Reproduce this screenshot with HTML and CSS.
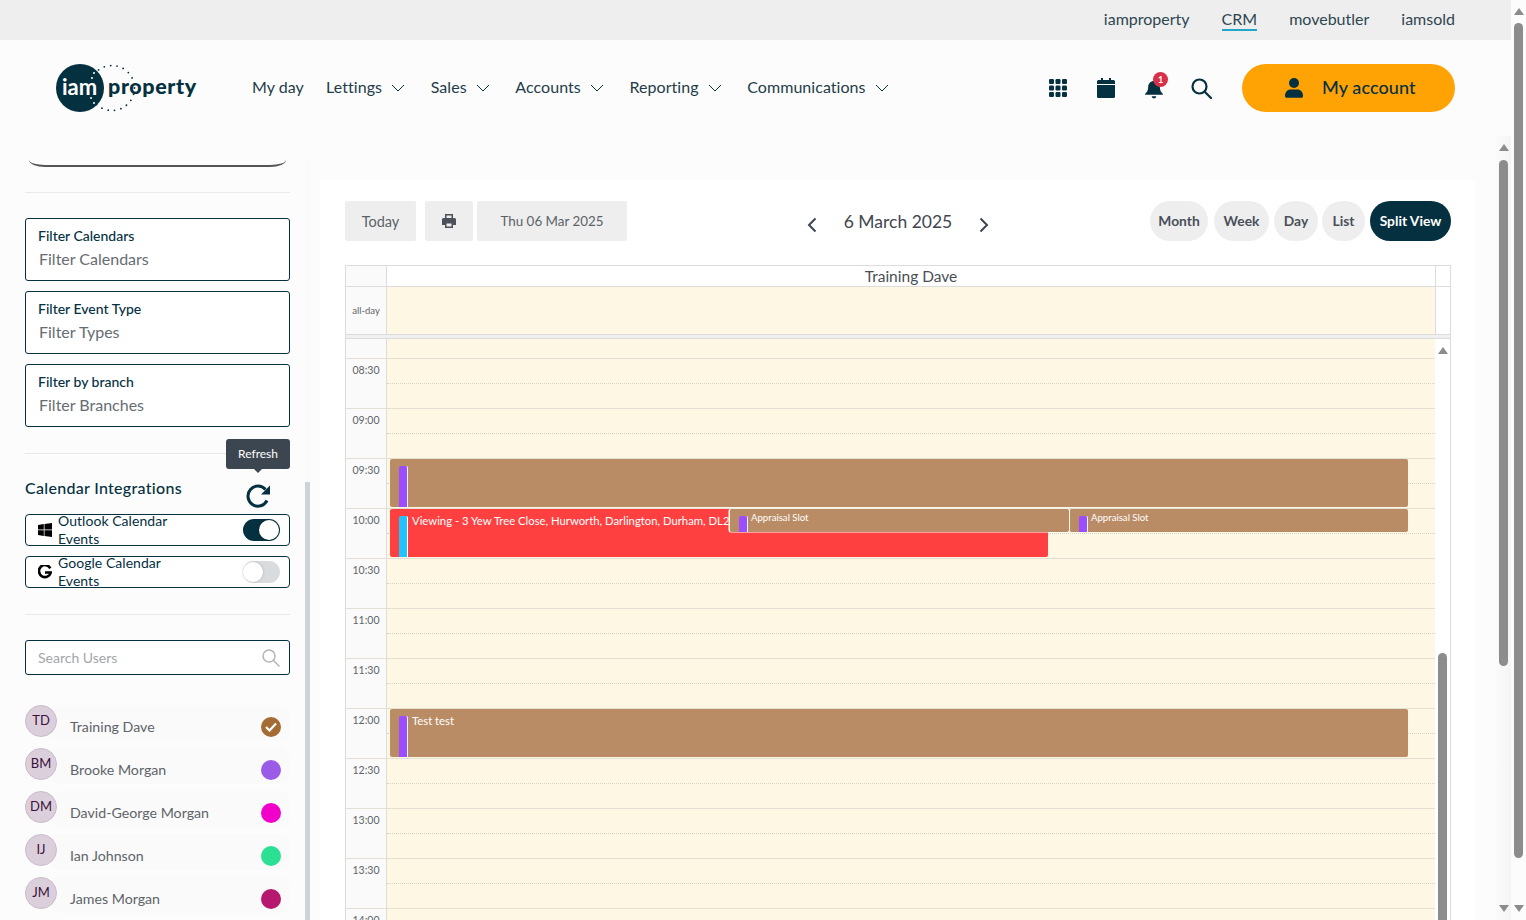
FILE: index.html
```html
<!DOCTYPE html>
<html lang="en">
<head>
<meta charset="utf-8">
<title>iam property CRM</title>
<link rel="stylesheet" href="styles.css">
</head>
<body>
<div class="page">
  <div class="topbar">
    <a class="top-link">iamproperty</a>
    <a class="top-link active">CRM</a>
    <a class="top-link">movebutler</a>
    <a class="top-link">iamsold</a>
  </div>
  <header class="header">
    <div class="logo">
      <svg class="logo-mark" width="80" height="50" viewBox="0 0 80 50">
        <circle cx="56" cy="24" r="22.500" fill="none" stroke="#04303f" stroke-width="1.800" stroke-linecap="round" stroke-dasharray="0 6.500"/>
        <circle cx="24" cy="24" r="24" fill="#04303f"/>
        <circle cx="38" cy="9" r="1" fill="#fff"/><circle cx="36" cy="14" r="1" fill="#fff"/><circle cx="35" cy="34" r="1" fill="#fff"/><circle cx="38" cy="39" r="1" fill="#fff"/>
        <text x="6" y="31" class="logo-iam">iam</text>
      </svg>
      <span class="logo-text">property</span>
    </div>
    <nav class="nav">
      <a class="nav-item myday">My day</a>
      <a class="nav-item">Lettings <svg class="chev" width="14" height="8" viewBox="0 0 14 8"><path d="M1 1l6 6 6-6" fill="none" stroke="#04303f" stroke-width="1"/></svg></a>
      <a class="nav-item">Sales <svg class="chev" width="14" height="8" viewBox="0 0 14 8"><path d="M1 1l6 6 6-6" fill="none" stroke="#04303f" stroke-width="1"/></svg></a>
      <a class="nav-item">Accounts <svg class="chev" width="14" height="8" viewBox="0 0 14 8"><path d="M1 1l6 6 6-6" fill="none" stroke="#04303f" stroke-width="1"/></svg></a>
      <a class="nav-item">Reporting <svg class="chev" width="14" height="8" viewBox="0 0 14 8"><path d="M1 1l6 6 6-6" fill="none" stroke="#04303f" stroke-width="1"/></svg></a>
      <a class="nav-item">Communications <svg class="chev" width="14" height="8" viewBox="0 0 14 8"><path d="M1 1l6 6 6-6" fill="none" stroke="#04303f" stroke-width="1"/></svg></a>
    </nav>
    <div class="head-icons">
      <svg width="18" height="18" viewBox="0 0 18 18" fill="#04303f"><rect x="0" y="0" width="5" height="5" rx="1.200"/><rect x="6.500" y="0" width="5" height="5" rx="1.200"/><rect x="13" y="0" width="5" height="5" rx="1.200"/><rect x="0" y="6.500" width="5" height="5" rx="1.200"/><rect x="6.500" y="6.500" width="5" height="5" rx="1.200"/><rect x="13" y="6.500" width="5" height="5" rx="1.200"/><rect x="0" y="13" width="5" height="5" rx="1.200"/><rect x="6.500" y="13" width="5" height="5" rx="1.200"/><rect x="13" y="13" width="5" height="5" rx="1.200"/></svg>
      <svg width="18" height="20" viewBox="0 0 18 20" fill="#04303f"><path d="M4 0h2v2h6V0h2v2h2.500A1.500 1.500 0 0 1 18 3.500V6H0V3.500A1.500 1.500 0 0 1 1.500 2H4z"/><path d="M0 7h18v11.500a1.500 1.500 0 0 1-1.500 1.500h-15A1.500 1.500 0 0 1 0 18.500z"/></svg>
      <span class="bell">
        <svg width="18" height="20" viewBox="0 0 20 22" fill="#04303f"><path d="M10 2c-3.800 0-6.500 3-6.500 7 0 4-1.500 5.500-3.200 7.200-.5.500-.2 1.300.5 1.300h18.400c.7 0 1-.8.500-1.300C18 14.500 16.500 13 16.500 9c0-4-2.700-7-6.500-7z"/><path d="M7.500 19h5c0 1.400-1.100 2.500-2.500 2.500S7.500 20.400 7.500 19z"/></svg>
        <span class="badge">1</span>
      </span>
      <svg width="21" height="21" viewBox="0 0 21 21" fill="none" stroke="#04303f" stroke-width="2.200"><circle cx="8.500" cy="8.500" r="7"/><path d="M13.500 13.500l6.500 6.500" stroke-linecap="round"/></svg>
    </div>
    <button class="account">
      <svg width="18" height="20" viewBox="0 0 18 20" fill="#04303f"><circle cx="9" cy="5" r="5"/><path d="M0 18c0-4 2.500-6.500 5.500-6.500h7c3 0 5.500 2.500 5.500 6.500 0 1-.8 1.800-1.800 1.800H1.800C.8 19.800 0 19 0 18z"/></svg>
      <span class="account-text">My account</span>
    </button>
  </header>
  <div class="body-row">
    <aside class="sidebar">
      <div class="clipped-box"></div>
      <hr class="rule first-rule">
      <div class="filter"><label class="filter-label">Filter Calendars</label><span class="filter-value">Filter Calendars</span></div>
      <div class="filter"><label class="filter-label">Filter Event Type</label><span class="filter-value">Filter Types</span></div>
      <div class="filter"><label class="filter-label">Filter by branch</label><span class="filter-value">Filter Branches</span></div>
      <hr class="rule integ-rule">
      <div class="integ-head">
        <h3 class="integ-title">Calendar Integrations</h3>
        <svg class="refresh" width="26" height="26" viewBox="0 0 26 26" fill="none"><path d="M21 17.500A10 10 0 1 1 19.500 6.500" stroke="#04303f" stroke-width="3"/><path d="M24 2.500v9h-9z" fill="#04303f"/></svg>
        <div class="tooltip">Refresh</div>
      </div>
      <div class="integ-row">
        <svg class="integ-icon" width="14" height="14" viewBox="0 0 14 14" fill="#000"><path d="M0 2l5.800-.9v5.500H0zM6.500 1L14 0v6.600H6.500zM0 7.300h5.800v5.600L0 12zM6.500 7.300H14V14l-7.500-1z"/></svg>
        <span class="integ-label">Outlook Calendar Events</span>
        <span class="toggle on"><i class="knob"></i></span>
      </div>
      <div class="integ-row">
        <svg class="integ-icon" width="14" height="15" viewBox="0 0 14 15" fill="none" stroke="#000" stroke-width="2.600"><path d="M12.300 3.300A6 6 0 1 0 12.800 7.500H7"/></svg>
        <span class="integ-label">Google Calendar Events</span>
        <span class="toggle"><i class="knob"></i></span>
      </div>
      <hr class="rule search-rule">
      <div class="user-search">
        <span>Search Users</span>
        <svg width="18" height="18" viewBox="0 0 18 18" fill="none" stroke="#b5b5b5" stroke-width="1.500"><circle cx="7" cy="7" r="6"/><path d="M11.500 11.500l6 6"/></svg>
      </div>
      <ul class="users">
        <li class="user"><span class="avatar">TD</span><span class="user-name">Training Dave</span><span class="dot brown"><svg width="12" height="10" viewBox="0 0 12 10" fill="none" stroke="#fff" stroke-width="2.200"><path d="M1 5l3.500 3.500L11 1.500"/></svg></span></li>
        <li class="user"><span class="avatar">BM</span><span class="user-name">Brooke Morgan</span><span class="dot purple"></span></li>
        <li class="user"><span class="avatar">DM</span><span class="user-name">David-George Morgan</span><span class="dot magenta"></span></li>
        <li class="user"><span class="avatar">IJ</span><span class="user-name">Ian Johnson</span><span class="dot green"></span></li>
        <li class="user"><span class="avatar">JM</span><span class="user-name">James Morgan</span><span class="dot plum"></span></li>
      </ul>
    </aside>
    <div class="side-track"><div class="side-thumb"></div></div>
    <main class="main">
      <section class="card">
        <div class="toolbar">
          <div class="tb-left">
            <button class="btn today">Today</button>
            <button class="btn print"><svg width="14" height="14" viewBox="0 0 14 14" fill="#4a5158"><path d="M3 0h8v4h1.500A1.500 1.500 0 0 1 14 5.500V11h-3v3H3v-3H0V5.500A1.500 1.500 0 0 1 1.500 4H3zm1.500 1.500V4h5V1.500zM4.500 9.500v3h5v-3z"/></svg></button>
            <button class="btn date">Thu 06 Mar 2025</button>
          </div>
          <div class="tb-center">
            <svg width="10" height="16" viewBox="0 0 10 16" fill="none" stroke="#3f4650" stroke-width="2"><path d="M8.500 1.500L2 8l6.500 6.500"/></svg>
            <span class="tb-title">6 March 2025</span>
            <svg width="10" height="16" viewBox="0 0 10 16" fill="none" stroke="#3f4650" stroke-width="2"><path d="M1.500 1.500L8 8l-6.500 6.500"/></svg>
          </div>
          <div class="tb-right">
            <button class="pill month">Month</button>
            <button class="pill week">Week</button>
            <button class="pill day">Day</button>
            <button class="pill list">List</button>
            <button class="pill split">Split View</button>
          </div>
        </div>
        <div class="cal">
          <div class="cal-head"><div class="gut"></div><div class="res">Training Dave</div><div class="right-gut"></div></div>
          <div class="cal-allday"><div class="gut allday-label">all-day</div><div class="allday-cell"></div><div class="right-gut"></div></div>
          <div class="cal-div"></div>
          <div class="cal-time">
            <div class="slot stub"><div class="gut"></div><div class="cell"></div></div>
            <div class="slot"><div class="gut">08:30</div><div class="cell"></div></div>
            <div class="slot"><div class="gut">09:00</div><div class="cell"></div></div>
            <div class="slot"><div class="gut">09:30</div><div class="cell"></div></div>
            <div class="slot"><div class="gut">10:00</div><div class="cell"></div></div>
            <div class="slot"><div class="gut">10:30</div><div class="cell"></div></div>
            <div class="slot"><div class="gut">11:00</div><div class="cell"></div></div>
            <div class="slot"><div class="gut">11:30</div><div class="cell"></div></div>
            <div class="slot"><div class="gut">12:00</div><div class="cell"></div></div>
            <div class="slot"><div class="gut">12:30</div><div class="cell"></div></div>
            <div class="slot"><div class="gut">13:00</div><div class="cell"></div></div>
            <div class="slot"><div class="gut">13:30</div><div class="cell"></div></div>
            <div class="slot"><div class="gut">14:00</div><div class="cell"></div></div>
            <div class="event ev-a"><i class="stripe vio"></i></div>
            <div class="event ev-b"><i class="stripe cyan"></i><span class="ev-text">Viewing - 3 Yew Tree Close, Hurworth, Darlington, Durham, DL2</span></div>
            <div class="event slotev ev-c"><i class="stripe vio"></i><span class="ev-text small">Appraisal Slot</span></div>
            <div class="event slotev ev-d"><i class="stripe vio"></i><span class="ev-text small">Appraisal Slot</span></div>
            <div class="event ev-e"><i class="stripe vio"></i><span class="ev-text">Test test</span></div>
            <div class="cal-track"><span class="arrow up"></span><div class="cal-thumb"></div></div>
          </div>
        </div>
      </section>
    </main>
  </div>
  <div class="sb inner"><span class="arrow up"></span><div class="sb-thumb"></div><span class="arrow down"></span></div>
  <div class="sb outer"><span class="arrow up"></span><div class="sb-thumb"></div><span class="arrow down"></span></div>
</div>
</body>
</html>
```
FILE: styles.css
```css
* { box-sizing: border-box; }
html, body { margin: 0; height: 920px; overflow: hidden; }
body { font-family: "Lato", "Liberation Sans", sans-serif; color: #04303f; background: #fcfcfc; }
.page { position: relative; width: 1526px; height: 920px; padding-right: 15px; display: flex; flex-direction: column; overflow: hidden; }

.topbar { height: 40px; background: #eeeeee; display: flex; justify-content: flex-end; align-items: center; gap: 32px; padding-right: 56px; flex: none; }
.top-link { font-size: 16px; color: #2e4650; padding: 0; border-bottom: 2px solid transparent; line-height: 20px; }
.top-link.active { border-bottom-color: #22a6c8; }

.header { height: 96px; display: flex; align-items: center; flex: none; padding: 0 56px; margin-bottom: -6px; }
.logo { display: flex; align-items: center; width: 196px; flex: none; }
.logo-mark { flex: none; margin-top: 2px; }
.logo-iam { font: 700 22px "Lato", sans-serif; fill: #fff; }
.logo-text { font-size: 21.500px; font-weight: 900; letter-spacing: .6px; color: #04303f; margin-left: -28px; margin-top: -5px; }
.nav { display: flex; gap: 25.700px; flex: 1; align-items: center; margin-bottom: 4px; }
.nav-item { font-size: 16px; color: #1f3d49; display: flex; align-items: center; gap: 9px; letter-spacing: .05px; }
.myday { margin-right: -3.500px; }
.chev { margin-top: 3px; }
.head-icons { display: flex; align-items: center; gap: 30px; margin-right: 30px; }
.bell { position: relative; display: block; height: 20px; margin-top: 2px; margin-right: -2px; }
.badge { position: absolute; left: 8px; top: -7px; width: 15px; height: 15px; border-radius: 50%; background: #d9304a; color: #fff; font-size: 9px; font-weight: 700; display: flex; align-items: center; justify-content: center; }
.account { width: 213px; height: 48px; border: 0; border-radius: 24px; background: #ffa305; display: flex; align-items: center; padding-left: 43px; gap: 19px; font: 500 18px "Lato", sans-serif; color: #04303f; letter-spacing: .1px; }
.account-text { margin-top: -2px; }

.body-row { flex: 1; display: flex; min-height: 0; }
.sidebar { width: 305px; flex: none; padding: 30px 15px 0 25px; overflow: hidden; }
.clipped-box { height: 7px; margin: 0 4px; border: solid #555; border-width: 0 0 2px; border-radius: 0 0 16px 16px / 0 0 7px 7px; }
.rule { border: 0; border-top: 1px solid #e9e9e9; margin: 0; }
.first-rule { margin: 25px 0; }
.filter { height: 63px; border: 1px solid #04303f; border-radius: 3px; background: #fff; padding: 8px 12px; margin-bottom: 10px; display: flex; flex-direction: column; }
.filter-label { font-size: 14px; color: #04303f; line-height: 17px; font-weight: 500; }
.filter-value { font-size: 16px; color: #666d72; line-height: 24px; margin: 3px 0 0 1px; }
.integ-rule { margin: 26px 0 0; }
.integ-head { position: relative; height: 60px; }
.integ-title { position: absolute; left: 0; top: 22px; margin: 0; font-size: 16px; font-weight: 500; line-height: 24px; letter-spacing: .3px; }
.refresh { position: absolute; left: 221px; top: 29px; }
.tooltip { position: absolute; right: 0; top: -15px; width: 64px; height: 30px; background: #3c4650; color: #fff; border-radius: 3px; font-size: 12px; padding-bottom: 2px; display: flex; align-items: center; justify-content: center; }
.tooltip::after { content: ""; position: absolute; left: 27px; bottom: -4px; border: 5px solid transparent; border-top-color: #3c4650; border-bottom: 0; }
.integ-row { height: 32px; border: 1px solid #04303f; border-radius: 4px; background: #fff; display: flex; align-items: center; padding: 0 9px 0 12px; margin-bottom: 10px; overflow: hidden; }
.integ-icon { flex: none; }
.integ-label { font-size: 14px; line-height: 18px; width: 126px; margin-left: 6px; color: #04303f; letter-spacing: .05px; }
.toggle { width: 37px; height: 22px; border-radius: 11px; background: #d9dcdf; margin-left: auto; position: relative; flex: none; }
.toggle.on { background: #04303f; }
.knob { position: absolute; left: 0; top: 1px; width: 20px; height: 20px; border-radius: 50%; background: #fff; box-shadow: 0 0 3px rgba(0,0,0,.2); }
.toggle.on .knob { left: 16px; }
.search-rule { margin: 26px 0 25px; }
.user-search { height: 35px; border: 1px solid #04303f; border-radius: 3px; background: #fff; display: flex; align-items: center; justify-content: space-between; padding: 0 9px 0 12px; font-size: 14px; color: #a3a7aa; }
.users { list-style: none; margin: 30px 0 0; padding: 0; }
.user { height: 36px; margin-bottom: 7px; margin-left: 25px; background: #fafafa; border-radius: 10px; display: flex; align-items: center; position: relative; padding: 8px 9px 0 20px; }
.avatar { position: absolute; left: -25px; top: 0; width: 32px; height: 32px; border-radius: 50%; background: #dccfdc; border: 1px solid #cbbccb; font-size: 13px; color: #3a0f3a; display: flex; align-items: center; justify-content: center; padding-bottom: 2px; }
.user-name { font-size: 14.200px; color: #5e6469; flex: 1; margin-top: -1px; }
.dot { width: 20px; height: 20px; border-radius: 50%; display: flex; align-items: center; justify-content: center; }
.brown { background: #a56b35; }
.purple { background: #9a5ce6; }
.magenta { background: #f000c8; }
.green { background: #2bdf93; }
.plum { background: #b5186e; }

.side-track { width: 5px; margin-top: 30px; background: #fafafa; position: relative; flex: none; }
.side-thumb { position: absolute; left: 0; right: 0; top: 322px; bottom: 0; background: #ced3d8; }
.main { flex: 1; min-width: 0; padding: 50px 0 0 10px; }
.card { width: 1155px; background: #fff; padding: 21px 24px 0 25px; height: 800px; overflow: hidden; }
.toolbar { display: flex; height: 40px; position: relative; justify-content: space-between; align-items: center; margin-bottom: 24px; }
.tb-left { display: flex; }
.btn { height: 40px; border: 0; background: #eeeeee; border-radius: 2px; font: 400 14.500px "Lato", sans-serif; color: #5b6268; display: flex; align-items: center; justify-content: center; }
.today { width: 71px; margin-right: 9px; }
.print { width: 48px; margin-right: 4px; }
.date { width: 150px; font-size: 13.400px; }
.tb-center { position: absolute; left: 462px; top: 0; height: 40px; width: 182px; display: flex; align-items: center; justify-content: space-between; }
.tb-center svg { margin-top: 8px; }
.tb-title { font-size: 17.500px; color: #3f4650; }
.tb-right { display: flex; gap: 5px; }
.pill { height: 40px; border: 0; border-radius: 20px; background: #eeeeee; font: 700 13.800px "Lato", sans-serif; color: #4a4f5a; padding: 0 0 2px; }
.month { width: 58px; }
.week { width: 55px; margin-left: 1px; }
.day { width: 44px; }
.list { width: 43px; margin-left: -1px; }
.split { width: 81px; background: #04303f; color: #fff; }

.cal { border: solid #dcdcdc; border-width: 1px 1px 0; height: 700px; }
.cal-head, .cal-allday { display: flex; border-bottom: 1px solid #dcdcdc; }
.cal-head { height: 21px; }
.cal-allday { height: 48px; }
.gut { width: 41px; flex: none; background: #fafafa; border-right: 1px solid #dcdcdc; font-size: 10.500px; color: #5e6469; text-align: center; }
.allday-label { display: flex; align-items: center; justify-content: center; font-size: 9.500px; }
.res { flex: 1; text-align: center; font-size: 15.500px; line-height: 21px; color: #4a4f55; }
.right-gut { width: 15px; flex: none; border-left: 1px solid #dcdcdc; }
.allday-cell { flex: 1; background: #fdf7e3; }
.cal-div { height: 4px; background: #f0f0f0; border-bottom: 1px solid #dcdcdc; }
.cal-time { position: relative; }
.slot { height: 50px; display: flex; border-top: 1px solid #e3dfd2; padding-right: 15px; }
.slot .gut { padding-top: 3px; line-height: 16px; }
.stub { height: 19px; border-top: 0; }
.cell { flex: 1; background: #fdf7e3; position: relative; }
.cell::after { content: ""; position: absolute; left: 0; right: 0; top: 24px; border-top: 1px dotted #d6d2c4; }
.stub .cell::after { display: none; }
.event { position: absolute; background: #b98c65; color: #fff; border-radius: 2px; overflow: hidden; }
.stripe { position: absolute; left: 9px; top: 7px; bottom: 0; width: 9px; border-radius: 2px 2px 0 0; border-right: 1px solid #fff; }
.vio { background: #9b4dff; }
.cyan { background: #22c4ff; }
.ev-text { position: absolute; left: 22px; top: 4px; font-size: 11.300px; line-height: 16px; white-space: nowrap; }
.ev-text.small { font-size: 9.600px; line-height: 12px; top: 3px; left: 21px; }
.ev-a { left: 44px; top: 120px; width: 1018px; height: 48px; }
.ev-b { left: 44px; top: 170px; width: 658px; height: 48px; background: #ff4040; }
.slotev { top: 170px; height: 23px; border: solid #fdf7e3; border-width: 0 0 0 1px; }
.ev-c { left: 383px; width: 340px; box-shadow: 0 0 0 .5px #fff; z-index: 1; }
.ev-d { left: 723px; width: 339px; z-index: 1; }
.ev-e { left: 44px; top: 370px; width: 1018px; height: 48px; }
.cal-track { position: absolute; right: 0; top: 0; width: 15px; bottom: 0; background: #fff; }
.cal-thumb { position: absolute; left: 3px; width: 9px; top: 314px; bottom: 0; background: #8c8c8c; border-radius: 5px 5px 0 0; }
.arrow { position: absolute; left: 50%; margin-left: -5px; border-left: 5px solid transparent; border-right: 5px solid transparent; }
.arrow.up { border-bottom: 7px solid #8c8c8c; top: 8px; }
.arrow.down { border-top: 7px solid #8c8c8c; bottom: 8px; }
.sb { position: absolute; top: 0; bottom: 0; width: 15px; }
.sb.outer { right: 0; background: #fcfcfc; }
.sb.outer .sb-thumb { position: absolute; left: 3px; width: 9px; top: 23px; height: 835px; background: #8c8c8c; border-radius: 5px; }
.sb.inner { top: 136px; right: 15px; background: linear-gradient(90deg, #fbfbfb, #f4f4f4); }
.sb.inner .sb-thumb { position: absolute; left: 3px; width: 9px; top: 24px; height: 506px; background: #8c8c8c; border-radius: 5px; }
```
